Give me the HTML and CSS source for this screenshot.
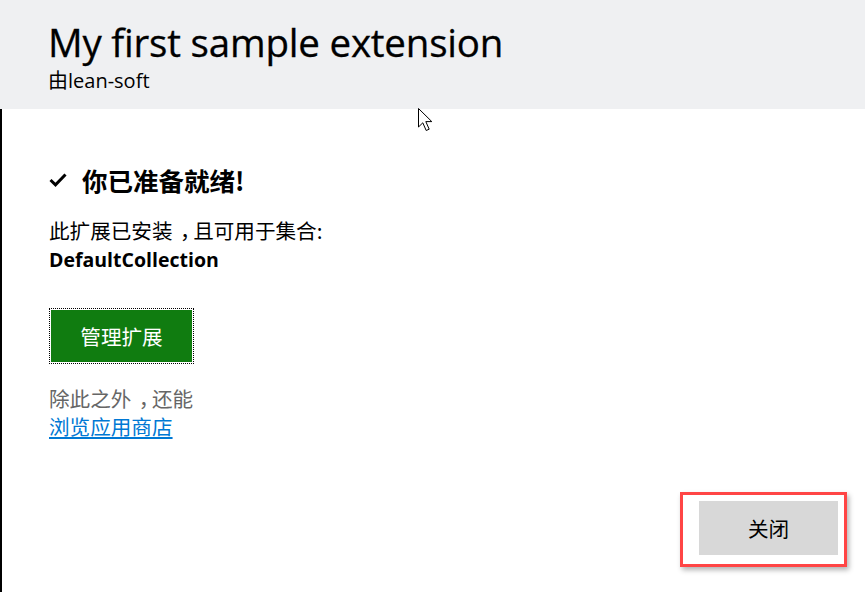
FILE: index.html
```html
<!DOCTYPE html>
<html>
<head>
<meta charset="utf-8">
<link rel="stylesheet" href="styles.css">
</head>
<body>
<header class="header">
  <h1 class="title">My first sample extension</h1>
  <div class="publisher">由lean-soft</div>
</header>
<main class="main">
  <h2 class="ready">
    <svg class="check" width="18" height="14" viewBox="0 0 18 14"><path d="M1.5 7 L6.5 11.8 L16.5 1.5" fill="none" stroke="#000" stroke-width="3"/></svg>
    <span>你已准备就绪!</span>
  </h2>
  <p class="installed">此扩展已安装<span class="comma">，</span>且可用于集合:<br><b class="coll">DefaultCollection</b></p>
  <div class="manage-wrap"><button class="manage">管理扩展</button></div>
  <p class="also">除此之外<span class="comma">，</span>还能<br><a class="browse" href="#">浏览应用商店</a></p>
  <div class="footer">
    <div class="highlight"><button class="close">关闭</button></div>
  </div>
</main>
<svg class="cursor" width="20" height="28" viewBox="0 0 20 28"><path d="M0.5 0.5 L0.5 19 L4.8 14.8 L8.2 22.5 L11.2 21.2 L7.8 13.6 L13.8 13.6 Z" fill="#fff" stroke="#000" stroke-width="1"/></svg>
</body>
</html>
```
FILE: styles.css
```css
html, body { margin: 0; padding: 0; }
body {
  width: 865px;
  height: 592px;
  overflow: hidden;
  background: #fff;
  font-family: "Open Sans", "Noto Sans CJK SC", sans-serif;
  color: #000;
  position: relative;
}
.header {
  background: #eff0f2;
  height: 109px;
  box-sizing: border-box;
  padding: 17px 0 0 48px;
}
.title {
  margin: 0;
  font-weight: 400;
  font-size: 38.5px;
  line-height: 50px;
  letter-spacing: -0.2px;
  -webkit-text-stroke: 0.3px #000;
}
.publisher {
  font-size: 20px;
  line-height: 24px;
  margin-top: 2px;
}
.main {
  border-left: 2px solid #000;
  height: 483px;
  box-sizing: border-box;
  padding: 52px 0 0 47px;
}
.ready {
  margin: 0;
  display: flex;
  align-items: center;
  gap: 15px;
  font-size: 25.5px;
  line-height: 38px;
  font-weight: 700;
}
.ready span { font-family: "Noto Sans CJK SC", sans-serif; font-weight: 700; }
.check { display: block; }
.installed {
  margin: 17px 0 0;
  font-size: 20.6px;
  line-height: 28px;
  font-family: "Noto Sans CJK SC", sans-serif;
}
.comma {
  padding-left: 0.36em;
  letter-spacing: -0.36em;
}
.coll {
  font-family: "Open Sans", sans-serif;
  font-weight: 700;
  font-size: 19.5px;
}
.manage-wrap {
  margin-top: 34px;
  display: inline-block;
  border: 1px dotted #000;
  padding: 1px;
}
.manage {
  display: block;
  width: 141px;
  height: 52px;
  background: #107c10;
  color: #fff;
  border: none;
  font-family: "Noto Sans CJK SC", sans-serif;
  font-size: 20.6px;
  padding: 0;
}
.also {
  margin: 20px 0 0;
  color: #666;
  font-size: 20.6px;
  line-height: 28px;
  font-family: "Noto Sans CJK SC", sans-serif;
}
.browse { color: #0078d4; text-decoration: underline; }
.footer {
  display: flex;
  justify-content: flex-end;
  margin-top: 52px;
  padding-right: 18px;
}
.highlight {
  border: 3px solid #ff4545;
  padding: 6px 6px 9px 16px;
  box-shadow: 2px 3px 5px rgba(0,0,0,0.3);
}
.close {
  display: block;
  width: 139px;
  height: 54px;
  background: #d8d8d8;
  border: none;
  font-family: "Noto Sans CJK SC", sans-serif;
  font-size: 20.6px;
  color: #000;
  padding: 0;
}
.cursor { position: absolute; left: 418px; top: 108px; }
```
